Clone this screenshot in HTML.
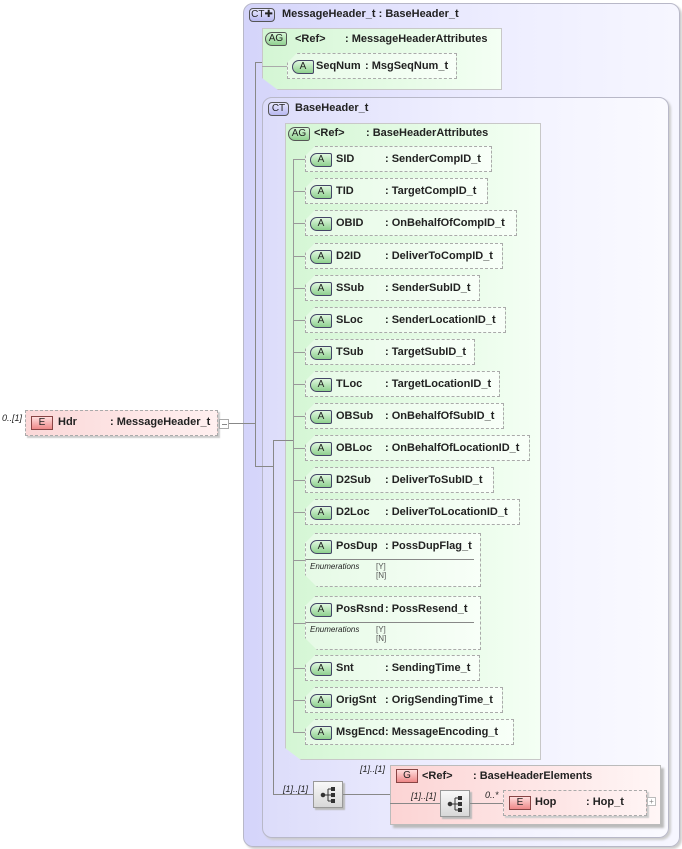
<!DOCTYPE html>
<html><head><meta charset="utf-8"><style>
*{margin:0;padding:0;box-sizing:border-box}
body{width:682px;height:849px;background:#fff;position:relative;overflow:hidden;font-family:"Liberation Sans",sans-serif;font-size:11px;font-weight:bold;color:#222}
.a{position:absolute}
.ct{position:absolute;border:1px solid #b8b8c8;border-radius:10px;box-shadow:2px 2px 2px #ccc}
.ag{position:absolute;border:1px solid #c8c8c8;background:linear-gradient(to right,#d4f6d4,#f4fff4);box-shadow:3px 3px 2px #bbb;clip-path:polygon(0 0,100% 0,100% 100%,16px 100%,0 calc(100% - 12px));}
.badge{position:absolute;height:14px;border:1px solid #555;border-radius:4px;font-size:10px;font-weight:normal;text-align:center;line-height:12px;color:#222}
.bct{background:linear-gradient(#e8e8ff,#b8b8f0)}
.bag{background:linear-gradient(#d8f8d8,#90d090);border-radius:8px 3px 3px 8px}
.at{position:absolute;height:26px;border:1px dashed #aaa;background:linear-gradient(to right,#e6fae6,#f8fff8);clip-path:polygon(10px 0,100% 0,100% 100%,0 100%,0 10px);box-shadow:2px 2px 1px #ccc}
.at .ba{position:absolute;left:4px;top:6px;width:22px;height:14px;border:1px solid #446;border-radius:7px 2px 2px 7px;background:linear-gradient(#dff8df,#8ed08e);font-size:10px;font-weight:normal;text-align:center;line-height:12px}
.at .n{position:absolute;left:30px;top:6px}
.at .t{position:absolute;left:79px;top:6px;white-space:nowrap}
.h{position:absolute;height:1px;background:#888}
.v{position:absolute;width:1px;background:#888}
.it{position:absolute;font-style:italic;font-weight:normal;font-size:9px}
.seq{position:absolute;width:30px;height:27px;border:1px solid #999;background:linear-gradient(#f8f8f8,#d8d8d8);box-shadow:2px 2px 1px #bbb}
.eb{position:absolute;width:22px;height:14px;border:1px solid #844;background:linear-gradient(#fdd,#e88);font-size:10px;font-weight:normal;text-align:center;line-height:12px}
.en{position:absolute;left:4px;font-size:8px;font-style:italic;font-weight:normal}
.ev{position:absolute;left:70px;font-size:8px;font-weight:normal;color:#555;line-height:9px}
.br{position:absolute;left:293px;width:12px;height:1px;background:#999}
</style></head><body>
<div class="ct" style="left:243px;top:3px;width:437px;height:844px;background:linear-gradient(to right,#d4d4fa,#eeeeff 60%,#f6f6ff)"></div>
<div class="badge bct" style="left:249px;top:8px;width:26px">CT✚</div>
<div class="a" style="left:282px;top:8px">MessageHeader_t : BaseHeader_t</div>

<div class="ag" style="left:262px;top:28px;width:240px;height:62px"></div>
<div class="badge bag" style="left:265px;top:32px;width:22px">AG</div>
<div class="a" style="left:295px;top:33px">&lt;Ref&gt;</div>
<div class="a" style="left:345px;top:33px">: MessageHeaderAttributes</div>
<div class="h" style="left:262px;top:66px;width:25px;background:#aaa"></div>
<div class="at" style="left:287px;top:53px;width:170px"><div class="ba">A</div><div class="n" style="left:28px">SeqNum</div><div class="t" style="left:77px">: MsgSeqNum_t</div></div>

<div class="ct" style="left:262px;top:97px;width:407px;height:741px;background:linear-gradient(to right,#dcdcfa,#f0f0ff 50%,#fafaff)"></div>
<div class="badge bct" style="left:268px;top:102px;width:21px">CT</div>
<div class="a" style="left:295px;top:102px">BaseHeader_t</div>

<div class="ag" style="left:285px;top:123px;width:256px;height:637px"></div>
<div class="badge bag" style="left:288px;top:127px;width:22px">AG</div>
<div class="a" style="left:314px;top:127px">&lt;Ref&gt;</div>
<div class="a" style="left:366px;top:127px">: BaseHeaderAttributes</div>

<div class="v" style="left:293px;top:159px;height:574px;background:#999"></div>
<div class="br" style="top:159px"></div><div class="br" style="top:191px"></div><div class="br" style="top:223px"></div><div class="br" style="top:256px"></div><div class="br" style="top:288px"></div><div class="br" style="top:320px"></div><div class="br" style="top:352px"></div><div class="br" style="top:384px"></div><div class="br" style="top:416px"></div><div class="br" style="top:448px"></div><div class="br" style="top:480px"></div><div class="br" style="top:512px"></div><div class="br" style="top:560px"></div><div class="br" style="top:623px"></div><div class="br" style="top:668px"></div><div class="br" style="top:700px"></div><div class="br" style="top:732px"></div>
<div class="at" style="left:305px;top:146px;width:187px"><div class="ba">A</div><div class="n">SID</div><div class="t">: SenderCompID_t</div></div>
<div class="at" style="left:305px;top:178px;width:183px"><div class="ba">A</div><div class="n">TID</div><div class="t">: TargetCompID_t</div></div>
<div class="at" style="left:305px;top:210px;width:212px"><div class="ba">A</div><div class="n">OBID</div><div class="t">: OnBehalfOfCompID_t</div></div>
<div class="at" style="left:305px;top:243px;width:198px"><div class="ba">A</div><div class="n">D2ID</div><div class="t">: DeliverToCompID_t</div></div>
<div class="at" style="left:305px;top:275px;width:175px"><div class="ba">A</div><div class="n">SSub</div><div class="t">: SenderSubID_t</div></div>
<div class="at" style="left:305px;top:307px;width:201px"><div class="ba">A</div><div class="n">SLoc</div><div class="t">: SenderLocationID_t</div></div>
<div class="at" style="left:305px;top:339px;width:170px"><div class="ba">A</div><div class="n">TSub</div><div class="t">: TargetSubID_t</div></div>
<div class="at" style="left:305px;top:371px;width:195px"><div class="ba">A</div><div class="n">TLoc</div><div class="t">: TargetLocationID_t</div></div>
<div class="at" style="left:305px;top:403px;width:199px"><div class="ba">A</div><div class="n">OBSub</div><div class="t">: OnBehalfOfSubID_t</div></div>
<div class="at" style="left:305px;top:435px;width:225px"><div class="ba">A</div><div class="n">OBLoc</div><div class="t">: OnBehalfOfLocationID_t</div></div>
<div class="at" style="left:305px;top:467px;width:189px"><div class="ba">A</div><div class="n">D2Sub</div><div class="t">: DeliverToSubID_t</div></div>
<div class="at" style="left:305px;top:499px;width:215px"><div class="ba">A</div><div class="n">D2Loc</div><div class="t">: DeliverToLocationID_t</div></div>
<div class="at" style="left:305px;top:533px;width:176px;height:54px;clip-path:polygon(10px 0,100% 0,100% 100%,12px 100%,0 calc(100% - 12px),0 10px)"><div class="ba">A</div><div class="n">PosDup</div><div class="t">: PossDupFlag_t</div><div class="h" style="left:0;top:25px;width:168px"></div><div class="en" style="top:28px">Enumerations</div><div class="ev" style="top:28px">[Y]<br>[N]</div></div>
<div class="at" style="left:305px;top:596px;width:176px;height:54px;clip-path:polygon(10px 0,100% 0,100% 100%,12px 100%,0 calc(100% - 12px),0 10px)"><div class="ba">A</div><div class="n">PosRsnd</div><div class="t">: PossResend_t</div><div class="h" style="left:0;top:25px;width:168px"></div><div class="en" style="top:28px">Enumerations</div><div class="ev" style="top:28px">[Y]<br>[N]</div></div>
<div class="at" style="left:305px;top:655px;width:175px"><div class="ba">A</div><div class="n">Snt</div><div class="t">: SendingTime_t</div></div>
<div class="at" style="left:305px;top:687px;width:198px"><div class="ba">A</div><div class="n">OrigSnt</div><div class="t">: OrigSendingTime_t</div></div>
<div class="at" style="left:305px;top:719px;width:209px"><div class="ba">A</div><div class="n">MsgEncd</div><div class="t">: MessageEncoding_t</div></div>

<!-- connector lines -->
<div class="h" style="left:229px;top:423px;width:26px"></div>
<div class="v" style="left:255px;top:62px;height:405px"></div>
<div class="h" style="left:255px;top:62px;width:7px"></div>
<div class="h" style="left:255px;top:466px;width:18px"></div>
<div class="v" style="left:273px;top:440px;height:355px"></div>
<div class="h" style="left:273px;top:440px;width:20px"></div>
<div class="h" style="left:273px;top:794px;width:40px"></div>

<!-- Hdr -->
<div class="it" style="left:2px;top:413px">0..[1]</div>
<div class="a" style="left:25px;top:410px;width:193px;height:26px;border:1px dashed #aaa;background:linear-gradient(to right,#fbd8d8,#fff0f0);box-shadow:2px 2px 1px #ccc"></div>
<div class="eb" style="left:31px;top:416px">E</div>
<div class="a" style="left:58px;top:416px">Hdr</div>
<div class="a" style="left:110px;top:416px">: MessageHeader_t</div>
<div class="a" style="left:219px;top:419px;width:10px;height:10px;border:1px solid #aaa;background:#fff"><div class="h" style="left:2px;top:4px;width:5px"></div></div>

<!-- sequence + group -->
<div class="it" style="left:283px;top:784px">[1]..[1]</div>
<div class="seq" style="left:313px;top:781px"></div>
<svg class="a" style="left:318px;top:785px" width="20" height="20"><g fill="#333" stroke="#333"><circle cx="5" cy="10" r="1.8"/><line x1="5" y1="10" x2="10" y2="10"/><line x1="10" y1="4" x2="10" y2="16"/><line x1="10" y1="4" x2="14" y2="4"/><line x1="10" y1="10" x2="14" y2="10"/><line x1="10" y1="16" x2="14" y2="16"/><rect x="13" y="2" width="4" height="4" stroke="none"/><rect x="13" y="8" width="4" height="4" stroke="none"/><rect x="13" y="14" width="4" height="4" stroke="none"/></g></svg>
<div class="h" style="left:343px;top:794px;width:47px"></div>
<div class="it" style="left:360px;top:764px">[1]..[1]</div>
<div class="a" style="left:390px;top:765px;width:271px;height:60px;border:1px solid #bbb;background:linear-gradient(to right,#fcd4d4,#fff6f6);box-shadow:3px 3px 2px #bbb"></div>
<div class="eb" style="left:396px;top:769px">G</div>
<div class="a" style="left:422px;top:770px">&lt;Ref&gt;</div>
<div class="a" style="left:473px;top:770px">: BaseHeaderElements</div>
<div class="h" style="left:390px;top:803px;width:50px"></div>
<div class="it" style="left:411px;top:791px">[1]..[1]</div>
<div class="seq" style="left:440px;top:790px"></div>
<svg class="a" style="left:445px;top:794px" width="20" height="20"><g fill="#333" stroke="#333"><circle cx="5" cy="10" r="1.8"/><line x1="5" y1="10" x2="10" y2="10"/><line x1="10" y1="4" x2="10" y2="16"/><line x1="10" y1="4" x2="14" y2="4"/><line x1="10" y1="10" x2="14" y2="10"/><line x1="10" y1="16" x2="14" y2="16"/><rect x="13" y="2" width="4" height="4" stroke="none"/><rect x="13" y="8" width="4" height="4" stroke="none"/><rect x="13" y="14" width="4" height="4" stroke="none"/></g></svg>
<div class="h" style="left:470px;top:803px;width:33px"></div>
<div class="it" style="left:485px;top:790px">0..*</div>
<div class="a" style="left:503px;top:790px;width:144px;height:26px;border:1px dashed #aaa;background:linear-gradient(to right,#fcdcdc,#fff4f4);box-shadow:2px 2px 1px #ccc"></div>
<div class="eb" style="left:509px;top:796px">E</div>
<div class="a" style="left:535px;top:796px">Hop</div>
<div class="a" style="left:586px;top:796px">: Hop_t</div>
<div class="a" style="left:647px;top:797px;width:9px;height:9px;border:1px solid #bbb;background:#fff;font-size:8px;line-height:7px;text-align:center;color:#888;font-weight:normal">+</div>
</body></html>
